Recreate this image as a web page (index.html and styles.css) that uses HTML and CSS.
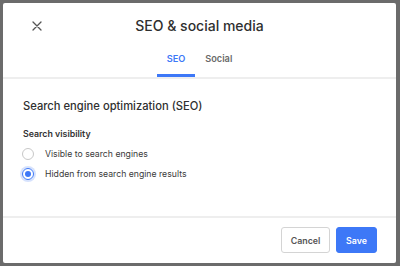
FILE: index.html
```html
<!DOCTYPE html>
<html lang="en">
<head>
  <meta charset="UTF-8" />
  <meta name="viewport" content="width=device-width, initial-scale=1.0">
  <title>SEO &amp; social media</title>
  <link rel="stylesheet" href="styles.css">
</head>
<body>
  <div class="modal">
    <header class="modal-header">
      <button class="close-btn" aria-label="Close">
        <svg width="10" height="10" viewBox="0 0 10 10">
          <path d="M1 1 L9 9 M9 1 L1 9" stroke="#555" stroke-width="1.3" stroke-linecap="round" fill="none"/>
        </svg>
      </button>
      <h1>SEO &amp; social media</h1>
    </header>

    <nav class="tabs">
      <span class="tab active">SEO</span>
      <span class="tab">Social</span>
    </nav>

    <section class="modal-body">
      <h2>Search engine optimization (SEO)</h2>
      <p class="field-label">Search visibility</p>
      <label class="radio-row">
        <span class="radio"></span>
        Visible to search engines
      </label>
      <label class="radio-row">
        <span class="radio checked"></span>
        Hidden from search engine results
      </label>
    </section>

    <footer class="modal-footer">
      <button class="btn btn-secondary">Cancel</button>
      <button class="btn btn-primary">Save</button>
    </footer>
  </div>
</body>
</html>
```

FILE: styles.css
```css
* {
  box-sizing: border-box;
}

body {
  font-family: 'Inter', 'Liberation Sans', sans-serif;
  background: #6b6b6b;
  margin: 0;
  padding: 3px 4px 3px 3px;
  color: #333;
}

.modal {
  background: #fff;
  width: 393px;
  height: 260px;
  border-radius: 2px;
  display: flex;
  flex-direction: column;
}

.modal-header {
  position: relative;
  height: 45px;
  display: flex;
  align-items: center;
  justify-content: center;
}

.modal-header h1 {
  margin: 0;
  font-size: 14px;
  font-weight: 500;
  color: #2f2f2f;
}

.close-btn {
  position: absolute;
  left: 28px;
  top: 17px;
  width: 12px;
  height: 12px;
  padding: 0;
  border: none;
  background: none;
  display: flex;
  align-items: center;
  justify-content: center;
}

.tabs {
  display: flex;
  justify-content: center;
  border-bottom: 2px solid #eeeeee;
}

.tab {
  padding: 4px 10px 8px;
  font-size: 9.2px;
  line-height: 14px;
  font-weight: 600;
  color: #6a6a6a;
  border-bottom: 3px solid transparent;
}

.tab.active {
  color: #3d78f7;
  border-bottom-color: #3d78f7;
}

.modal-body {
  flex: 1;
  padding: 18px 20px 0;
}

.modal-body h2 {
  margin: 0 0 12px;
  font-size: 11.2px;
  line-height: 18px;
  font-weight: 500;
  color: #2f2f2f;
}

.field-label {
  margin: 0 0 3px;
  font-size: 8.8px;
  line-height: 14px;
  font-weight: 600;
  color: #333;
}

.radio-row {
  display: flex;
  align-items: center;
  height: 20px;
  font-size: 8.7px;
  color: #3a3a3a;
}

.radio {
  width: 12px;
  height: 12px;
  margin: 0 11px 0 -1px;
  border: 1px solid #c8c8c8;
  border-radius: 50%;
  display: flex;
  align-items: center;
  justify-content: center;
}

.radio.checked {
  border-color: #3d78f7;
  box-shadow: 0 0 0 2px #d6e2fd;
}

.radio.checked::after {
  content: "";
  width: 6px;
  height: 6px;
  border-radius: 50%;
  background: #3d78f7;
}

.modal-footer {
  border-top: 2px solid #eeeeee;
  padding: 9px 19px 10px;
  display: flex;
  justify-content: flex-end;
  gap: 6px;
}

.btn {
  font-family: inherit;
  height: 26px;
  font-size: 8.8px;
  font-weight: 600;
  border-radius: 3px;
  padding: 0;
}

.btn-secondary {
  width: 49px;
  background: #fff;
  color: #555;
  border: 1px solid #d4d4d4;
}

.btn-primary {
  width: 41px;
  background: #3d78f7;
  color: #fff;
  border: 1px solid #3d78f7;
}
```
